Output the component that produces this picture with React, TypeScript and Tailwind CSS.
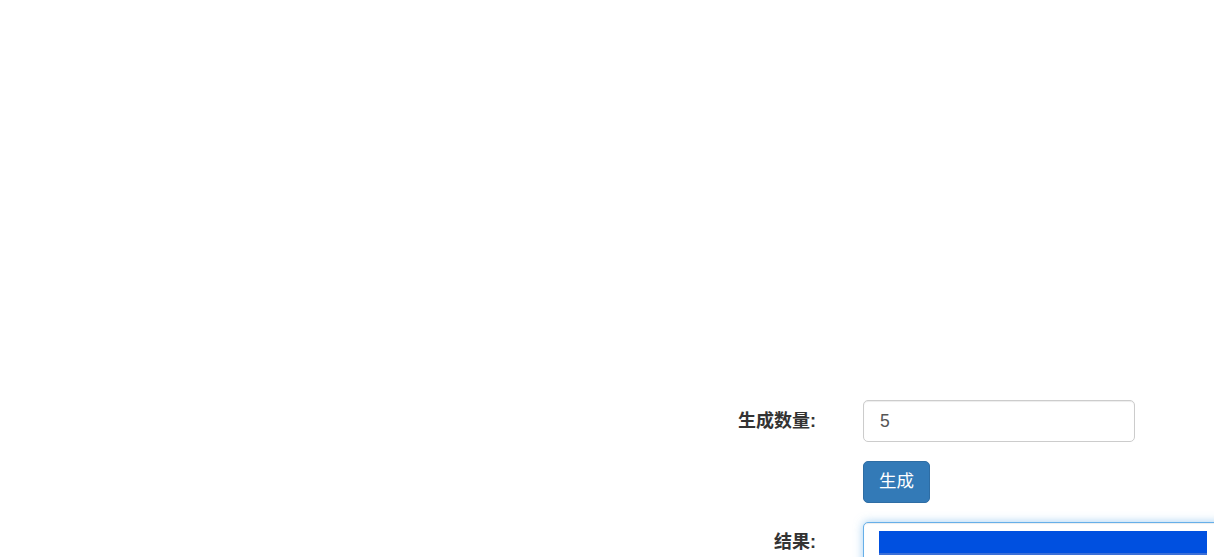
export default function App() {
  return (
    <div
      className="w-[1214px] h-[557px] overflow-hidden bg-white text-[#333] text-[17.5px]"
      style={{ fontFamily: '"Liberation Sans", Arial, "Noto Sans CJK SC", sans-serif' }}
    >
      <div className="flex flex-col gap-[19px] pt-[400px]">
        <div className="flex items-center">
          <label className="w-[816px] shrink-0 text-right font-bold text-[18px]">生成数量:</label>
          <div className="ml-[47px] shrink-0">
            <input
              defaultValue="5"
              className="w-[272px] h-[42px] px-[16px] border border-[#ccc] rounded-[5px] text-[#555] text-[17.5px] outline-none shadow-[inset_0_1px_1px_rgba(0,0,0,0.075)]"
            />
          </div>
        </div>
        <div className="flex">
          <div className="w-[816px] shrink-0" />
          <button className="ml-[47px] shrink-0 h-[42px] px-[15px] bg-[#337ab7] border border-[#2e6da4] rounded-[5px] text-white text-[17.5px] leading-none">
            生成
          </button>
        </div>
        <div className="flex items-start">
          <label className="w-[816px] shrink-0 text-right font-bold text-[18px] pt-[7px]">结果:</label>
          <div className="ml-[47px] w-[360px] h-[120px] shrink-0 border border-[#66afe9] rounded-[5px] bg-white pt-[8px] px-[15px] shadow-[inset_0_1px_1px_rgba(0,0,0,0.075),0_0_10px_rgba(102,175,233,0.6)]">
            <div className="h-[24px] bg-[#0050e0] border-b-[2px] border-[#3b6fd6]" />
          </div>
        </div>
      </div>
    </div>
  );
}
